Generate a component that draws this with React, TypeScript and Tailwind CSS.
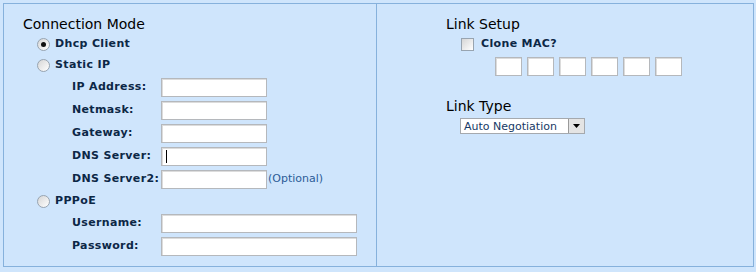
import React from "react";

const font = { fontFamily: '"DejaVu Sans", Verdana, sans-serif' };

function Radio({ checked }: { checked?: boolean }) {
  return (
    <span className="w-[13px] h-[13px] rounded-full border border-[#98a4b0] bg-gradient-to-br from-[#d6d6d6] to-white flex items-center justify-center shrink-0">
      {checked && <span className="w-[5px] h-[5px] rounded-full bg-[#111]" />}
    </span>
  );
}

function TextBox({ w, cursor }: { w: string; cursor?: boolean }) {
  return (
    <div className={`${w} h-[19px] bg-white border border-[#b5b8bc] shadow-[inset_1px_1px_0_#dcdcdc] flex items-center pl-[4px]`}>
      {cursor && <span className="w-px h-[13px] bg-black" />}
    </div>
  );
}

function Field({ label, w, cursor, extra }: { label: string; w: string; cursor?: boolean; extra?: string }) {
  return (
    <div className="h-[23px] flex items-center pl-[68px]">
      <span className="w-[89px] text-[11px] font-bold tracking-[0.35px] text-[#0c2746]">{label}</span>
      <TextBox w={w} cursor={cursor} />
      {extra && <span className="text-[11px] text-[#2b5c97] ml-px">{extra}</span>}
    </div>
  );
}

function RadioRow({ label, checked }: { label: string; checked?: boolean }) {
  return (
    <div className="h-[21px] flex items-center pl-[33px] gap-[5px]">
      <Radio checked={checked} />
      <span className="text-[11px] font-bold tracking-[0.35px] text-[#0c2746]">{label}</span>
    </div>
  );
}

export default function App() {
  return (
    <div className="w-[756px] h-[272px] bg-[#cfe5fc] p-[3px]" style={font}>
      <div className="w-[751px] h-[264px] border border-[#86b1dc] flex">
        <div className="w-[373px] border-r border-[#86b1dc] pt-[10px]">
          <div className="h-[20px] flex items-center pl-[19px] text-[14px] text-black">Connection Mode</div>
          <RadioRow label="Dhcp Client" checked />
          <RadioRow label="Static IP" />
          <Field label="IP Address:" w="w-[106px]" />
          <Field label="Netmask:" w="w-[106px]" />
          <Field label="Gateway:" w="w-[106px]" />
          <Field label="DNS Server:" w="w-[106px]" cursor />
          <Field label="DNS Server2:" w="w-[106px]" extra="(Optional)" />
          <RadioRow label="PPPoE" />
          <Field label="Username:" w="w-[196px]" />
          <Field label="Password:" w="w-[196px]" />
        </div>
        <div className="flex-1 pt-[10px] pl-[69px]">
          <div className="h-[20px] flex items-center text-[14px] text-black">Link Setup</div>
          <div className="h-[21px] flex items-center pl-[15px] gap-[7px]">
            <span className="w-[13px] h-[13px] border border-[#98a4b0] bg-gradient-to-br from-[#d6d6d6] to-white" />
            <span className="text-[11px] font-bold tracking-[0.35px] text-[#0c2746]">Clone MAC?</span>
          </div>
          <div className="flex gap-[5px] pl-[49px] pt-[2px]">
            {[0, 1, 2, 3, 4, 5].map((i) => (
              <div key={i} className="w-[27px] h-[19px] bg-white border border-[#b5b8bc] shadow-[inset_1px_1px_0_#dcdcdc]" />
            ))}
          </div>
          <div className="h-[20px] mt-[20px] flex items-center text-[14px] text-black">Link Type</div>
          <div className="ml-[14px] mt-[2px] w-[125px] h-[16px] bg-white border border-[#a5a9ae] flex items-center">
            <span className="flex-1 pl-[3px] text-[11px] text-[#173a66] leading-none">Auto Negotiation</span>
            <span className="w-[16px] h-[14px] bg-[#e4e4e4] border-l border-[#9a9a9a] flex items-center justify-center">
              <svg width="7" height="4" viewBox="0 0 7 4"><path d="M0 0h7L3.5 4z" fill="#000" /></svg>
            </span>
          </div>
        </div>
      </div>
    </div>
  );
}
